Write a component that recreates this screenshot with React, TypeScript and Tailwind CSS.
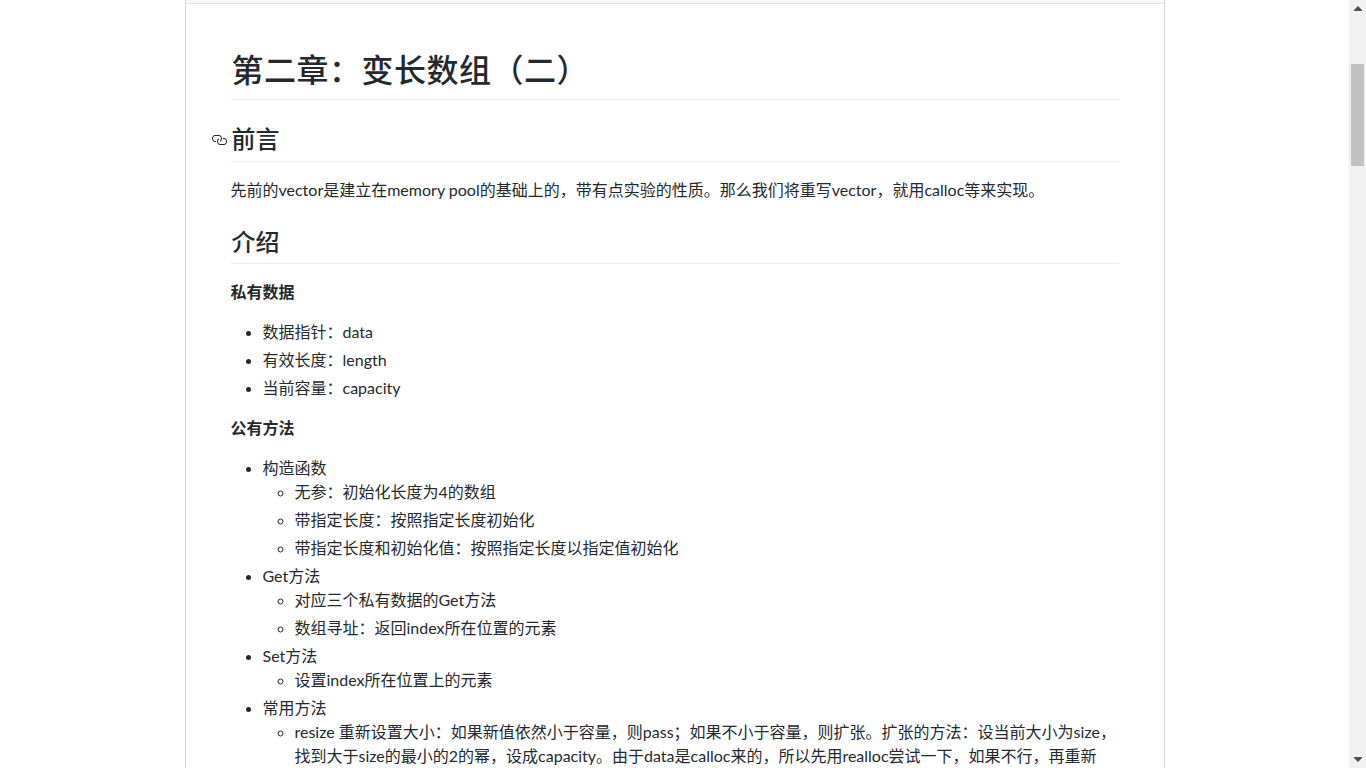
const cjk = "font-['Lato','Noto_Sans_CJK_SC',sans-serif]";

function LinkIcon() {
  return (
    <svg viewBox="0 0 16 16" className="absolute top-2 left-[-20px] h-4 w-4 fill-[#24292e]">
      <path
        fillRule="evenodd"
        d="M4 9h1v1H4c-1.5 0-3-1.69-3-3.5S2.55 3 4 3h4c1.45 0 3 1.69 3 3.5 0 1.41-.91 2.72-2 3.25V8.59c.58-.45 1-1.27 1-2.09C10 5.22 8.98 4 8 4H4c-.98 0-2 1.22-2 2.5S3 9 4 9zm9-3h-1v1h1c1 0 2 1.22 2 2.5S13.98 12 13 12H9c-.98 0-2-1.22-2-2.5 0-.83.42-1.64 1-2.09V6.25c-1.09.53-2 1.84-2 3.25C6 11.31 7.55 13 9 13h4c1.45 0 3-1.69 3-3.5S14.5 6 13 6z"
      />
    </svg>
  );
}

function Scrollbar() {
  return (
    <div className="flex h-screen w-[17px] shrink-0 flex-col items-center bg-[#f1f1f1]">
      <div className="flex h-[17px] w-full shrink-0 items-center justify-center">
        <svg viewBox="0 0 8 5" className="h-[5px] w-2 fill-[#505050]">
          <path d="M4 0 8 4v1H0V4z" />
        </svg>
      </div>
      <div className="mt-[47px] h-[102px] w-[13px] bg-[#c1c1c1]" />
      <div className="flex-1" />
      <div className="flex h-[17px] w-full shrink-0 items-center justify-center">
        <svg viewBox="0 0 8 5" className="h-[5px] w-2 fill-[#505050]">
          <path d="M0 0h8v1L4 5 0 1z" />
        </svg>
      </div>
    </div>
  );
}

export default function App() {
  return (
    <div className="flex h-screen overflow-hidden bg-white">
      <div className="min-w-0 flex-1 overflow-hidden">
        <div className="mx-auto h-[1200px] w-[980px] border-x border-[#d1d5da]">
          <div className="h-[4px] border-b border-[#e1e4e8] bg-[#f6f8fa]" />
          <article className={`${cjk} px-[45px] pt-[46px] text-base leading-6 text-[#24292e]`}>
            <h1 className="mb-4 border-b border-[#eaecef] pt-px pb-2 pl-px font-['Liberation_Serif','Noto_Sans_CJK_SC',serif] text-[32px] leading-10 font-medium tracking-[0.5px]">
              第二章：变长数组（二）
            </h1>
            <h2 className="relative mt-6 mb-4 border-b border-[#eaecef] pt-px pb-1.5 pl-px font-['Liberation_Serif','Noto_Sans_CJK_SC',serif] text-2xl leading-[30px] font-medium">
              <LinkIcon />
              前言
            </h2>
            <p className="mb-4">先前的vector是建立在memory pool的基础上的，带有点实验的性质。那么我们将重写vector，就用calloc等来实现。</p>
            <h2 className="mt-6 mb-4 border-b border-[#eaecef] pt-0.5 pb-[5px] pl-px font-['Liberation_Serif','Noto_Sans_CJK_SC',serif] text-2xl leading-[30px] font-medium">
              介绍
            </h2>
            <p className="mb-4 font-semibold">私有数据</p>
            <ul className="mb-4 list-disc pl-8">
              <li>数据指针：data</li>
              <li className="mt-1">有效长度：length</li>
              <li className="mt-1">当前容量：capacity</li>
            </ul>
            <p className="mb-4 font-semibold">公有方法</p>
            <ul className="list-disc pl-8">
              <li>
                构造函数
                <ul className="list-[circle] pl-8">
                  <li>无参：初始化长度为4的数组</li>
                  <li className="mt-1">带指定长度：按照指定长度初始化</li>
                  <li className="mt-1">带指定长度和初始化值：按照指定长度以指定值初始化</li>
                </ul>
              </li>
              <li className="mt-1">
                Get方法
                <ul className="list-[circle] pl-8">
                  <li>对应三个私有数据的Get方法</li>
                  <li className="mt-1">数组寻址：返回index所在位置的元素</li>
                </ul>
              </li>
              <li className="mt-1">
                Set方法
                <ul className="list-[circle] pl-8">
                  <li>设置index所在位置上的元素</li>
                </ul>
              </li>
              <li className="mt-1">
                常用方法
                <ul className="list-[circle] pl-8">
                  <li>resize 重新设置大小：如果新值依然小于容量，则pass；如果不小于容量，则扩张。扩张的方法：设当前大小为size，找到大于size的最小的2的幂，设成capacity。由于data是calloc来的，所以先用realloc尝试一下，如果不行，再重新</li>
                </ul>
              </li>
            </ul>
          </article>
        </div>
      </div>
      <Scrollbar />
    </div>
  );
}
